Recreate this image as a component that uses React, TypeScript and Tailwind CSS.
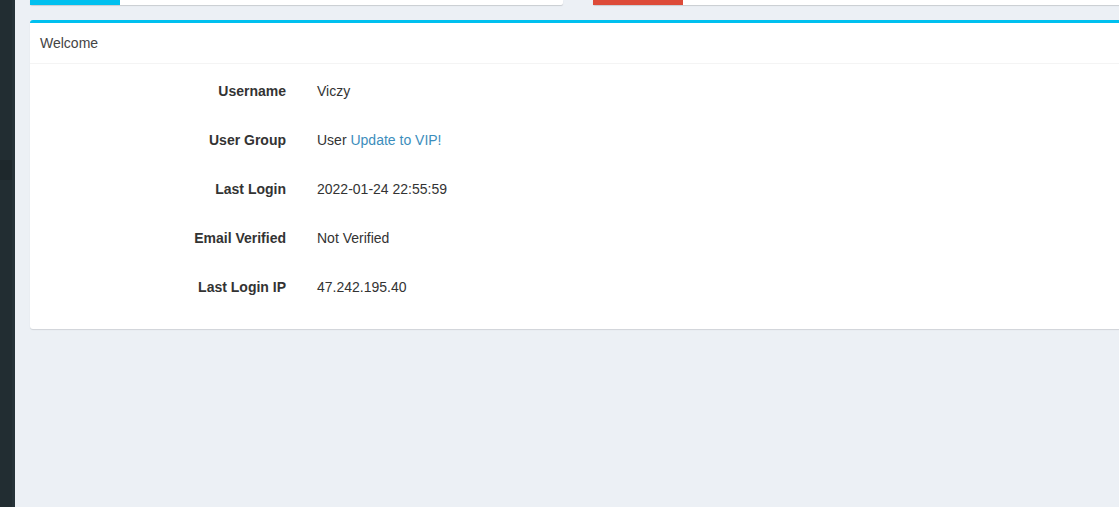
import React from 'react';

const rows: { label: string; value: React.ReactNode }[] = [
  { label: 'Username', value: 'Viczy' },
  {
    label: 'User Group',
    value: (
      <>
        User <a className="text-[#3c8dbc]">Update to VIP!</a>
      </>
    ),
  },
  { label: 'Last Login', value: '2022-01-24 22:55:59' },
  { label: 'Email Verified', value: 'Not Verified' },
  { label: 'Last Login IP', value: '47.242.195.40' },
];

export default function App() {
  return (
    <div className="flex w-[1119px] h-[507px] overflow-hidden bg-[#ecf0f5] font-['Liberation_Sans',Arial,sans-serif] text-[14px] text-[#333]">
      {/* Sidebar edge */}
      <aside className="flex w-[15px] shrink-0">
        <div className="w-[12px] bg-[#222d32] flex flex-col">
          <div className="h-[160px]" />
          <div className="h-[20px] bg-[#1e282c]" />
        </div>
        <div className="w-[3px] bg-[#263238]" />
      </aside>

      {/* Content */}
      <main className="w-[1126px] shrink-0 px-[15px]">
        {/* Top info boxes (cut off) */}
        <div className="flex gap-[30px]">
          <div className="flex w-[533px] h-[5px] bg-white rounded-b-[2px] shadow-[0_1px_1px_rgba(0,0,0,0.15)]">
            <div className="w-[90px] bg-[#00c0ef]" />
          </div>
          <div className="flex w-[533px] h-[5px] bg-white rounded-b-[2px] shadow-[0_1px_1px_rgba(0,0,0,0.15)]">
            <div className="w-[90px] bg-[#dd4b39]" />
          </div>
        </div>

        {/* Welcome box */}
        <section className="mt-[15px] w-[1096px] bg-white border-t-[3px] border-[#00c0ef] rounded-[3px] shadow-[0_1px_1px_rgba(0,0,0,0.12)]">
          <header className="h-[41px] px-[10px] flex items-center border-b border-[#f4f4f4] text-[#444]">
            Welcome
          </header>
          <div className="px-[10px] pt-[10px] pb-[25px] flex flex-col gap-[15px]">
            {rows.map((r) => (
              <div key={r.label} className="flex h-[34px] items-center leading-[20px]">
                <div className="w-[246px] text-right font-bold">{r.label}</div>
                <div className="pl-[31px]">{r.value}</div>
              </div>
            ))}
          </div>
        </section>
      </main>
    </div>
  );
}
